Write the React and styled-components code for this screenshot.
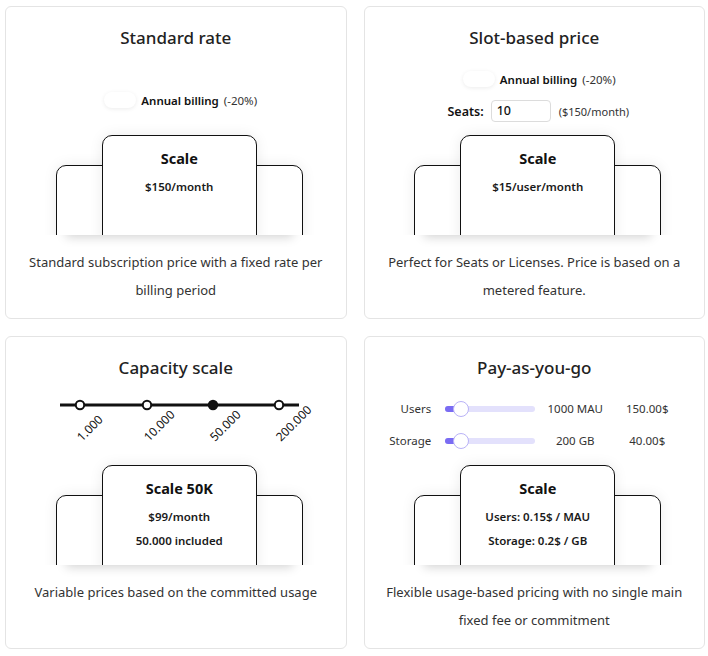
import React from 'react';
import styled, { createGlobalStyle } from 'styled-components';

const GlobalStyle = createGlobalStyle`
  body {
    margin: 0;
    background: #fff;
    font-family: "Noto Sans", "Open Sans", sans-serif;
    color: #222;
  }
`;

const Page = styled.div`
  display: grid;
  grid-template-columns: minmax(0, 1fr) minmax(0, 1fr);
  grid-auto-rows: 313px;
  gap: 17px;
  padding: 6px 3px 7px 5px;
`;

const Card = styled.section`
  min-width: 0;
  display: flex;
  flex-direction: column;
  align-items: center;
  border: 1px solid #e4e4e4;
  border-radius: 6px;
  padding: 19px 20px 0;
  box-sizing: border-box;
`;

const Title = styled.h2`
  margin: 0;
  font-size: 17px;
  line-height: 24px;
  font-weight: 500;
  color: #222;
`;

const Controls = styled.div`
  height: 85px;
  width: 100%;
  box-sizing: border-box;
  padding-top: ${(p) => p.$top}px;
  display: flex;
  flex-direction: column;
  align-items: center;
  gap: ${(p) => p.$gap || 0}px;
`;

const ToggleRow = styled.label`
  display: flex;
  align-items: center;
  gap: 5px;
  height: 20px;
  font-size: 11.5px;
  color: #111;
  margin-left: ${(p) => p.$shift || 0}px;
`;

const Switch = styled.span`
  width: 32px;
  height: 16px;
  border-radius: 8px;
  background: #fff;
  box-shadow: 0 1px 4px rgba(0, 0, 0, 0.08);
`;

const Strong = styled.span`
  font-weight: 600;
`;

const Muted = styled.span`
  color: #333;
`;

const SeatsRow = styled.div`
  display: flex;
  align-items: center;
  height: 22px;
  font-size: 12.5px;
  margin-left: 8px;
`;

const SeatsLabel = styled.span`
  font-weight: 600;
  color: #111;
  margin-right: 7px;
`;

const SeatsInput = styled.div`
  width: 60px;
  height: 22px;
  box-sizing: border-box;
  border: 1px solid #dcdcdc;
  border-radius: 4px;
  padding-left: 5px;
  font-size: 12.5px;
  font-weight: 500;
  line-height: 20px;
  color: #111;
  margin-right: 8px;
`;

const SeatsPrice = styled.span`
  font-size: 11px;
  color: #333;
`;

const Stage = styled.div`
  position: relative;
  display: flex;
  align-items: flex-start;
  height: 100px;
  margin-left: 7px;
  box-shadow: 0 12px 10px -10px rgba(0, 0, 0, 0.18);
`;

const Clip = styled.div`
  display: flex;
  align-items: flex-start;
  height: 100px;
  clip-path: inset(-30px -30px 0 -30px);
`;

const Tier = styled.div`
  position: relative;
  z-index: ${(p) => (p.$main ? 2 : 1)};
  width: 155px;
  height: ${(p) => (p.$main ? 110 : 80)}px;
  margin-top: ${(p) => (p.$main ? 0 : 30)}px;
  margin-left: ${(p) => (p.$overlapLeft ? -109 : 0)}px;
  margin-right: ${(p) => (p.$overlapRight ? -109 : 0)}px;
  box-sizing: border-box;
  border: 1.5px solid #111;
  border-radius: 10px 10px 0 0;
  background: #fff;
  box-shadow: 0 0 14px rgba(0, 0, 0, 0.08);
  display: flex;
  flex-direction: column;
  align-items: center;
  padding-top: 12px;
`;

const TierName = styled.div`
  font-size: 14.5px;
  line-height: 20px;
  font-weight: 700;
  color: #111;
`;

const TierLine = styled.div`
  font-size: 11.5px;
  line-height: 24px;
  font-weight: 600;
  color: #1a1a1a;
  margin-top: ${(p) => (p.$first ? 7 : 0)}px;
`;

const Description = styled.p`
  margin: 13px 0 0;
  font-size: 13px;
  line-height: 28px;
  text-align: center;
  color: #333;
`;

const CapacityAxis = styled.svg`
  display: block;
  overflow: visible;
  margin-left: 2px;
`;

const UsageGrid = styled.div`
  display: grid;
  grid-template-columns: 60px 104px 80px 64px;
  row-gap: 12px;
  align-items: center;
  margin-right: 18px;
  font-size: 11.5px;
  color: #333;
`;

const UsageLabel = styled.span`
  text-align: right;
  line-height: 20px;
`;

const UsageValue = styled.span`
  text-align: center;
  line-height: 20px;
`;

const Track = styled.div`
  position: relative;
  height: 6px;
  margin-left: 14px;
  border-radius: 3px;
  background: #e3e1fc;
`;

const Fill = styled.div`
  height: 6px;
  border-radius: 3px 0 0 3px;
  background: #7a6cf3;
`;

const Thumb = styled.div`
  position: absolute;
  top: 50%;
  width: 16px;
  height: 16px;
  margin: -8px 0 0 -8px;
  box-sizing: border-box;
  border-radius: 50%;
  background: #fff;
  border: 1.5px solid #b9b2f7;
`;

const TierStage = ({ children }) => (
  <Stage>
    <Clip>
      <Tier $overlapRight />
      <Tier $main>{children}</Tier>
      <Tier $overlapLeft />
    </Clip>
  </Stage>
);

const Toggle = ({ shift }) => (
  <ToggleRow $shift={shift}>
    <Switch />
    <Strong>Annual billing</Strong>
    <Muted>(-20%)</Muted>
  </ToggleRow>
);

const steps = [
  { x: 33, label: '1.000' },
  { x: 100, label: '10.000' },
  { x: 166, label: '50.000', active: true },
  { x: 232, label: '200.000' },
];

const Capacity = () => (
  <CapacityAxis width="260" height="60" viewBox="0 0 260 60">
    <line x1="13" y1="10" x2="252" y2="10" stroke="#111" strokeWidth="3" />
    {steps.map((s) => (
      <g key={s.label}>
        <circle
          cx={s.x}
          cy="10"
          r="4.2"
          fill={s.active ? '#111' : '#fff'}
          stroke="#111"
          strokeWidth="2"
        />
        <text
          x={s.x + 2}
          y="47"
          fontSize="12"
          fill="#111"
          fontFamily='"Noto Sans", sans-serif'
          transform={`rotate(-45 ${s.x + 2} 47)`}
        >
          {s.label}
        </text>
      </g>
    ))}
  </CapacityAxis>
);

const Slider = ({ pct }) => (
  <Track>
    <Fill style={{ width: `${pct}%` }} />
    <Thumb style={{ left: `${pct}%` }} />
  </Track>
);

const App = () => (
  <>
    <GlobalStyle />
    <Page>
      <Card>
        <Title>Standard rate</Title>
        <Controls $top={40}>
          <Toggle shift={10} />
        </Controls>
        <TierStage>
          <TierName>Scale</TierName>
          <TierLine $first>$150/month</TierLine>
        </TierStage>
        <Description>
          Standard subscription price with a fixed rate per billing period
        </Description>
      </Card>

      <Card>
        <Title>Slot-based price</Title>
        <Controls $top={19} $gap={11}>
          <Toggle shift={10} />
          <SeatsRow>
            <SeatsLabel>Seats:</SeatsLabel>
            <SeatsInput>10</SeatsInput>
            <SeatsPrice>($150/month)</SeatsPrice>
          </SeatsRow>
        </Controls>
        <TierStage>
          <TierName>Scale</TierName>
          <TierLine $first>$15/user/month</TierLine>
        </TierStage>
        <Description>
          Perfect for Seats or Licenses. Price is based on a metered feature.
        </Description>
      </Card>

      <Card>
        <Title>Capacity scale</Title>
        <Controls $top={15}>
          <Capacity />
        </Controls>
        <TierStage>
          <TierName>Scale 50K</TierName>
          <TierLine $first>$99/month</TierLine>
          <TierLine>50.000 included</TierLine>
        </TierStage>
        <Description>Variable prices based on the committed usage</Description>
      </Card>

      <Card>
        <Title>Pay-as-you-go</Title>
        <Controls $top={19}>
          <UsageGrid>
            <UsageLabel>Users</UsageLabel>
            <Slider pct={17} />
            <UsageValue>1000 MAU</UsageValue>
            <UsageValue>150.00$</UsageValue>
            <UsageLabel>Storage</UsageLabel>
            <Slider pct={17} />
            <UsageValue>200 GB</UsageValue>
            <UsageValue>40.00$</UsageValue>
          </UsageGrid>
        </Controls>
        <TierStage>
          <TierName>Scale</TierName>
          <TierLine $first>Users: 0.15$ / MAU</TierLine>
          <TierLine>Storage: 0.2$ / GB</TierLine>
        </TierStage>
        <Description>
          Flexible usage-based pricing with no single main fixed fee or commitment
        </Description>
      </Card>
    </Page>
  </>
);

export default App;
